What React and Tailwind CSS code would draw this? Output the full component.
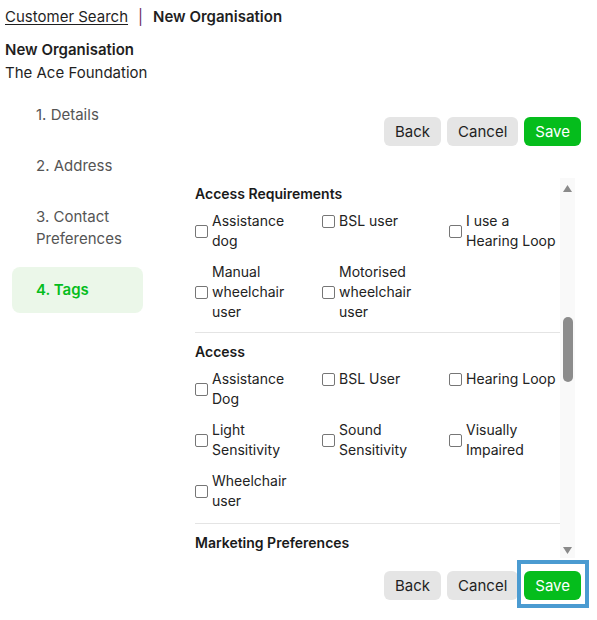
import React from "react";

const font = { fontFamily: "Inter, 'Noto Sans', sans-serif" };

function Btn({ children, primary }) {
  return (
    <button
      className={
        primary
          ? "h-[29px] px-[11px] rounded-md bg-[#05bd1c] text-white text-[15px] leading-[29px]"
          : "h-[29px] px-[11px] rounded-md bg-[#e5e5e5] text-[#1f1f1f] text-[15px] leading-[29px]"
      }
    >
      {children}
    </button>
  );
}

function Check({ label }) {
  return (
    <label className="flex items-center gap-[4px]">
      <span className="w-[13px] h-[13px] shrink-0 rounded-[2px] border border-[#767676] bg-white" />
      <span className="w-[92px] text-[14px] leading-[20px] text-[#222]">{label}</span>
    </label>
  );
}

function Section({ title, items, pt, pb, last }) {
  return (
    <div className={pt + " " + (last ? "" : pb + " border-b border-[#e4e4e4]")}>
      <div className="text-[14px] leading-[20px] font-semibold text-[#1a1a1a]">{title}</div>
      {items && (
        <div className="mt-[7px] grid grid-cols-[127px_127px_127px] gap-y-[11px] items-start">
          {items.map((it) => (
            <Check key={it} label={it} />
          ))}
        </div>
      )}
    </div>
  );
}

export default function App() {
  return (
    <div className="w-[597px] h-[620px] bg-white text-[#1f1f1f] overflow-hidden" style={font}>
      <div className="px-[5px] pt-[6px]">
        <div className="flex items-center text-[15px] leading-[22px]">
          <span className="underline underline-offset-2">Customer Search</span>
          <span className="mx-[10px] text-[#6b2c5f]">|</span>
          <span className="font-semibold">New Organisation</span>
        </div>
        <div className="mt-[10px] text-[15px] leading-[23px] font-semibold">New Organisation</div>
        <div className="text-[15px] leading-[23px]">The Ace Foundation</div>
      </div>

      <div className="flex mt-[8px]">
        <nav className="ml-[12px] w-[131px] flex flex-col gap-[5px] text-[15px] leading-[22px] text-[#555]">
          <div className="pl-[24px] py-[12px]">1. Details</div>
          <div className="pl-[24px] py-[12px]">2. Address</div>
          <div className="pl-[24px] py-[12px]">3. Contact Preferences</div>
          <div className="pl-[24px] py-[12px] rounded-lg bg-[#ebf7e9] text-[#05bd1c] font-semibold">4. Tags</div>
        </nav>

        <div className="ml-[42px] w-[396px] flex flex-col">
          <div className="mt-[25px] flex justify-end gap-[6px]">
            <Btn>Back</Btn>
            <Btn>Cancel</Btn>
            <Btn primary>Save</Btn>
          </div>

          <div className="mt-[32px] w-[390px] h-[380px] flex">
            <div className="flex-1 pl-[10px] overflow-hidden">
              <Section
                pt="pt-[6px]"
                pb="pb-[10px]"
                title="Access Requirements"
                items={["Assistance dog", "BSL user", "I use a Hearing Loop", "Manual wheelchair user", "Motorised wheelchair user"]}
              />
              <Section
                pt="pt-[9px]"
                pb="pb-[12px]"
                title="Access"
                items={["Assistance Dog", "BSL User", "Hearing Loop", "Light Sensitivity", "Sound Sensitivity", "Visually Impaired", "Wheelchair user"]}
              />
              <Section last pt="pt-[9px]" title="Marketing Preferences" />
            </div>
            <div className="w-[15px] bg-[#f9f9f9] flex flex-col items-center">
              <svg width="9" height="7" viewBox="0 0 9 7" className="mt-[7px]">
                <polygon points="4.5,0 9,7 0,7" fill="#8a8a8a" />
              </svg>
              <div className="mt-[125px] w-[10px] h-[65px] rounded-full bg-[#8c8c8c]" />
              <div className="flex-1" />
              <svg width="9" height="7" viewBox="0 0 9 7" className="mb-[4px]">
                <polygon points="0,0 9,0 4.5,7" fill="#8a8a8a" />
              </svg>
            </div>
          </div>

          <div className="mt-[13px] flex justify-end gap-[6px]">
            <Btn>Back</Btn>
            <Btn>Cancel</Btn>
            <div className="relative">
              <Btn primary>Save</Btn>
              <div className="absolute -left-[7px] -right-[8px] -top-[11px] -bottom-[8px] border-4 border-[#4b9bd1] pointer-events-none" />
            </div>
          </div>
        </div>
      </div>
    </div>
  );
}
